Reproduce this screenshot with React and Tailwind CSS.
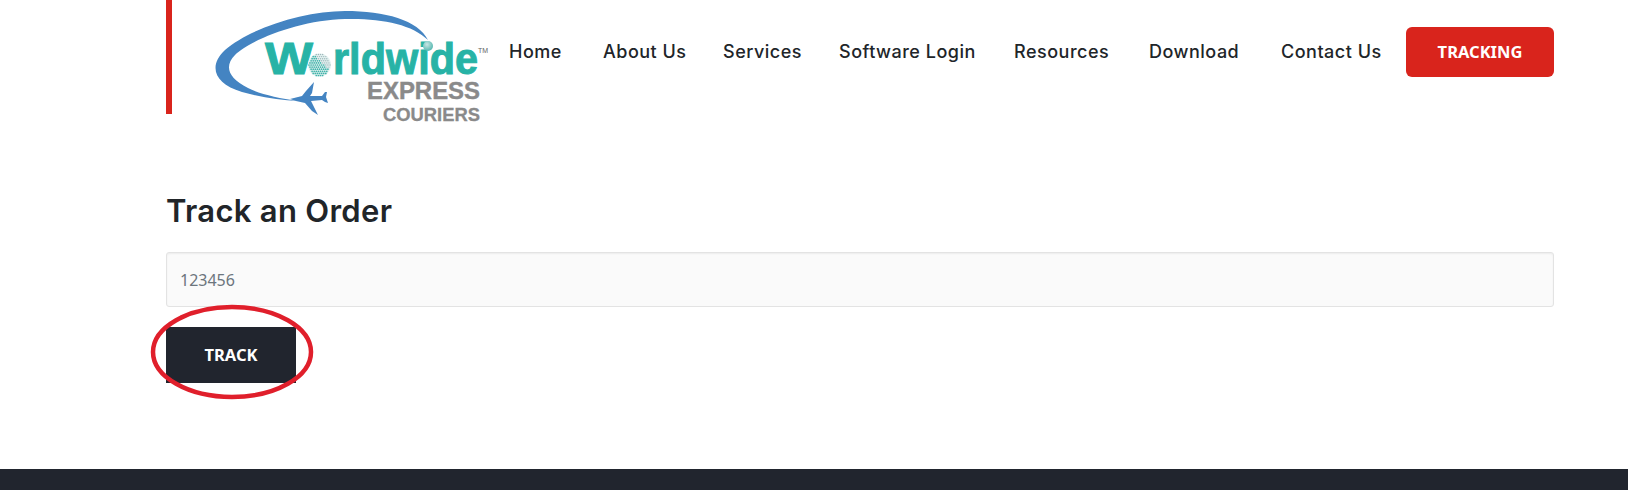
import React from "react";

const navLinks = [
  { label: "Home", w: "w-[56px]" },
  { label: "About Us", w: "w-[82px]" },
  { label: "Services", w: "w-[78px]" },
  { label: "Software Login", w: "w-[137px]" },
  { label: "Resources", w: "w-[97px]" },
  { label: "Download", w: "w-[94px]" },
  { label: "Contact Us", w: "w-[104px]" },
];

// dotted globe in the logo
const globeDots = [];
for (let row = -5; row <= 5; row++) {
  for (let col = -5; col <= 5; col++) {
    const x = col * 2.1 + (row % 2 ? 1 : 0);
    const y = row * 2.1;
    if (x * x + y * y < 125) globeDots.push({ x, y, big: x - y < 5 });
  }
}

const Logo = () => (
  <svg viewBox="0 0 300 130" className="block h-[130px] w-[300px] shrink-0">
    <defs>
      <radialGradient id="tipBall" cx="40%" cy="35%" r="70%">
        <stop offset="0%" stopColor="#c9e6e4" />
        <stop offset="100%" stopColor="#4fb5ad" />
      </radialGradient>
    </defs>
    <path
      d="M228 40 C218 20 185 11 145 11 C105 11 50 28 25 50 C8 66 14 84 42 92 C60 97 80 100 98 101 C78 98 60 94 48 88 C28 78 24 66 35 55 C50 40 100 20 145 19 C180 18 212 24 228 40 Z"
      fill="#4484c2"
    />
    <path
      d="M90 99 L102 96 L106 91 L114 82 L112 93 L110 96 L122 96 L125 92 L127 92 L126 97 L128 103 L125 102 L122 100 L111 101 L113 105 L118 115 L112 111 L105 103 L96 101 Z"
      fill="#4484c2"
    />
    <text x="65" y="74" textLength="48" lengthAdjust="spacingAndGlyphs" fill="#27b3a6" stroke="#27b3a6" strokeWidth="1" fontFamily="Liberation Sans, sans-serif" fontWeight="700" fontSize="45">W</text>
    <text x="133" y="74" textLength="145" lengthAdjust="spacingAndGlyphs" fill="#27b3a6" stroke="#27b3a6" strokeWidth="1" fontFamily="Liberation Sans, sans-serif" fontWeight="700" fontSize="45">rldwide</text>
    <circle cx="119.5" cy="65" r="11.5" fill="#e3f1f0" />
    {globeDots.map((d, i) => (
      <circle key={i} cx={119.5 + d.x} cy={65 + d.y} r={d.big ? 0.85 : 0.7} fill={d.big ? "#3fb3aa" : "#9fb8bb"} />
    ))}
    <circle cx="228" cy="46" r="5" fill="url(#tipBall)" />
    <text x="278" y="53" fill="#666666" fontFamily="Liberation Sans, sans-serif" fontSize="7">TM</text>
    <text x="167" y="99" textLength="113" lengthAdjust="spacingAndGlyphs" fill="#8a8a8a" stroke="#8a8a8a" strokeWidth="0.4" fontFamily="Liberation Sans, sans-serif" fontWeight="700" fontSize="23">EXPRESS</text>
    <text x="183" y="121" textLength="97" lengthAdjust="spacingAndGlyphs" fill="#8a8a8a" stroke="#8a8a8a" strokeWidth="0.3" fontFamily="Liberation Sans, sans-serif" fontWeight="700" fontSize="18">COURIERS</text>
  </svg>
);

export default function App() {
  return (
    <div className="flex h-[490px] w-[1628px] flex-col overflow-hidden bg-white font-['Inter',sans-serif] text-[#212529]">
      <header className="flex h-[114px] items-start pl-[166px] pr-[74px]">
        <div className="h-[114px] w-[6px] shrink-0 bg-[#d9241c]" />
        <div className="ml-[28px]">
          <Logo />
        </div>
        <nav className="ml-[9px] mt-[26px] flex h-[50px] shrink-0 items-center gap-[38px] text-[18px] tracking-[0.5px] font-medium whitespace-nowrap">
          {navLinks.map((link) => (
            <a key={link.label} className={link.w}>{link.label}</a>
          ))}
        </nav>
        <a className="ml-[21px] mt-[27px] flex h-[50px] w-[148px] shrink-0 items-center justify-center rounded-[6px] bg-[#d9241c] font-['Noto_Sans',sans-serif] text-[16.5px] font-bold text-white">
          TRACKING
        </a>
      </header>

      <main className="relative flex-1 pl-[166px] pr-[74px] pt-[76px]">
        <h1 className="text-[31px] leading-[42px] tracking-[0.3px] font-semibold">Track an Order</h1>
        <input
          readOnly
          value="123456"
          className="mt-[20px] block h-[55px] w-full rounded-[3px] border border-[#e3e3e3] bg-[#fafafa] px-[13px] font-['Noto_Sans',sans-serif] text-[16px] text-[#6c757d] shadow-[inset_0_1px_2px_rgba(0,0,0,0.06)]"
        />
        <button className="mt-[20px] block h-[56px] w-[130px] bg-[#21252e] font-['Noto_Sans',sans-serif] text-[16.5px] font-bold text-white">
          TRACK
        </button>
        <svg viewBox="0 0 170 100" className="pointer-events-none absolute left-[148px] top-[190px] h-[100px] w-[170px]">
          <ellipse cx="84" cy="48" rx="79" ry="45" fill="none" stroke="#e01f2b" strokeWidth="4.5" />
        </svg>
      </main>

      <footer className="h-[21px] bg-[#21252e]" />
    </div>
  );
}
